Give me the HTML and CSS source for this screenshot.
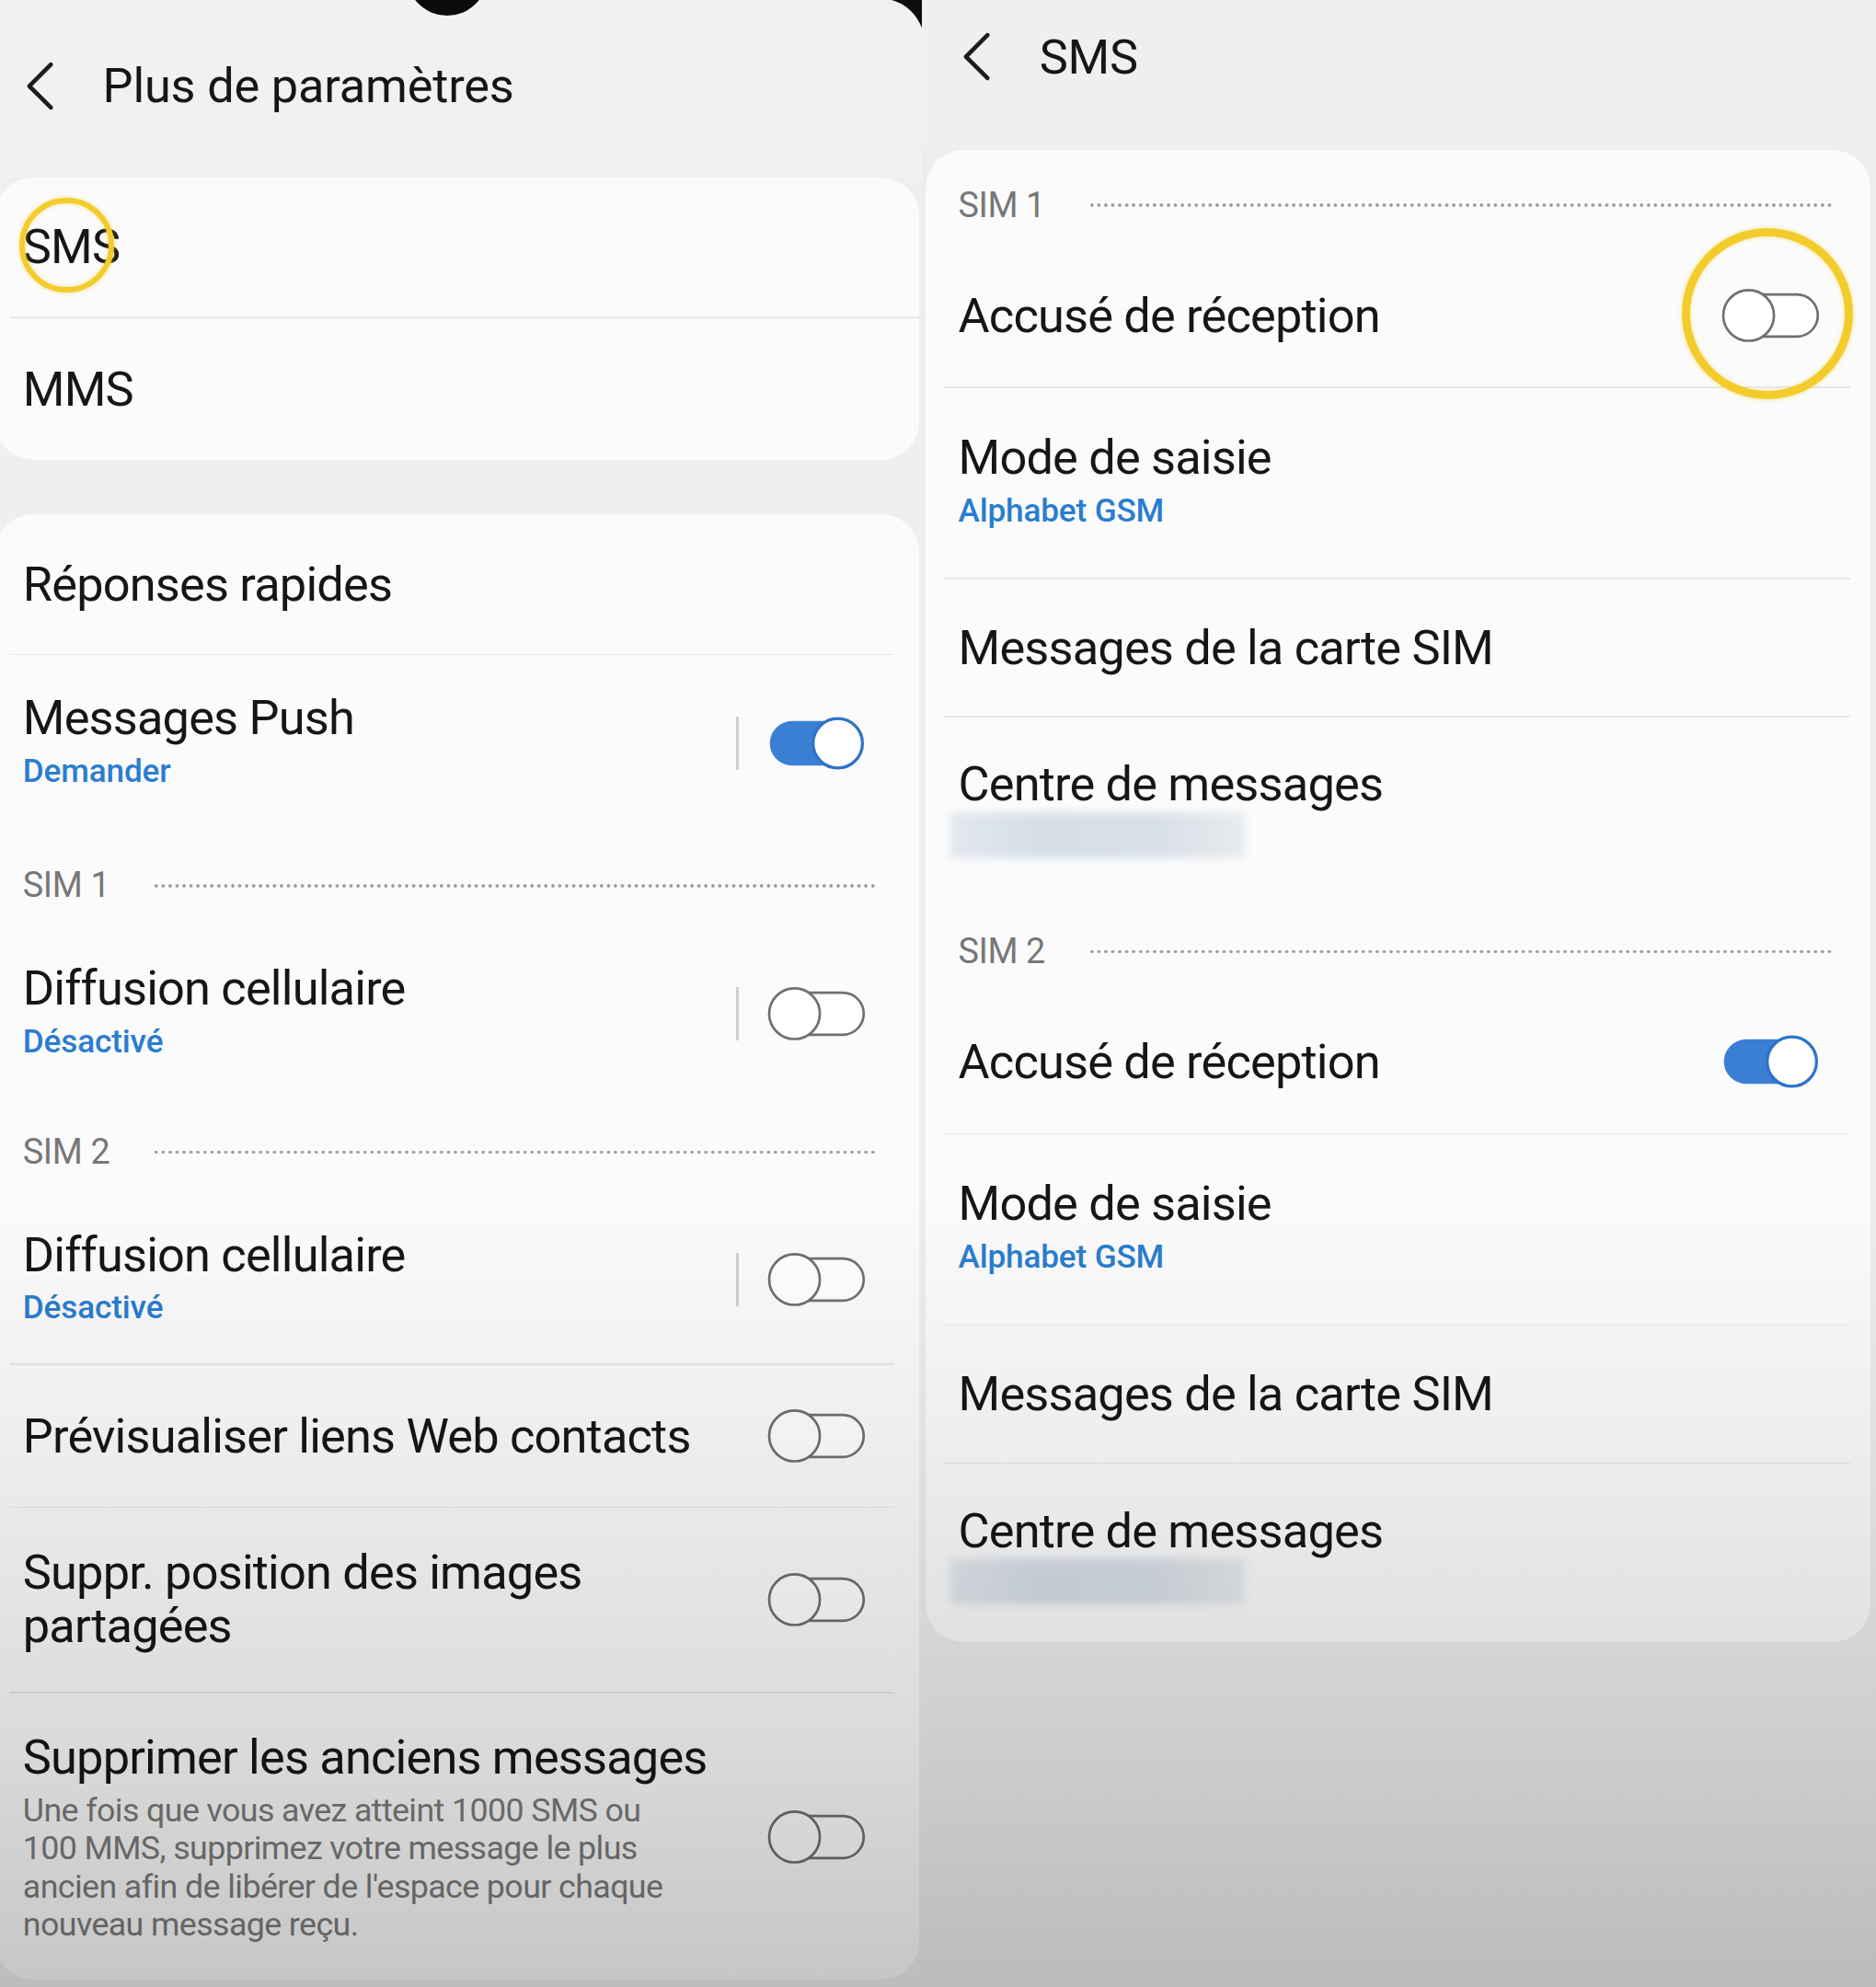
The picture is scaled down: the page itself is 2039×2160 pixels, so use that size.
FILE: index.html
```html
<!DOCTYPE html>
<html lang="fr">
<head>
<meta charset="utf-8">
<title>Paramètres SMS</title>
<link rel="stylesheet" href="styles.css">
</head>
<body>
<div class="screen">
  <section class="panel left">
    <header class="appbar">
      <svg class="back" viewBox="0 0 26 40" width="26" height="40"><polyline points="22,3 5,20 22,37" fill="none" stroke="#1d1d1d" stroke-width="3.4" stroke-linecap="round" stroke-linejoin="round"/></svg>
      <h1 class="apptitle">Plus de paramètres</h1>
    </header>

    <div class="card card-top">
      <div class="row h-110"><div class="text"><div class="title sms-title">SMS</div></div></div>
      <div class="divider"></div>
      <div class="row h-112"><div class="text"><div class="title">MMS</div></div></div>
    </div>

    <div class="card card-main">
      <div class="row h-110"><div class="text"><div class="title">Réponses rapides</div></div></div>
      <div class="divider"></div>
      <div class="row h-139">
        <div class="text"><div class="title">Messages Push</div><div class="sub">Demander</div></div>
        <span class="vbar"></span>
        <svg class="toggle" viewBox="0 0 80 46"><rect x="2" y="5" width="73" height="36" rx="18" fill="#3b7fd4"/><circle cx="57" cy="23" r="20" fill="#fff" stroke="#2f73c6" stroke-width="2.4"/></svg>
      </div>
      <div class="simhead"><span class="simlabel">SIM 1</span><span class="dots"></span></div>
      <div class="row h-132">
        <div class="text"><div class="title">Diffusion cellulaire</div><div class="sub">Désactivé</div></div>
        <span class="vbar"></span>
        <svg class="toggle" viewBox="0 0 80 46"><rect x="16" y="6" width="62" height="34" rx="17" fill="#fff" stroke="#707070" stroke-width="2"/><circle cx="22" cy="23" r="20.5" fill="#fff" stroke="#707070" stroke-width="2"/></svg>
      </div>
      <div class="simhead"><span class="simlabel">SIM 2</span><span class="dots"></span></div>
      <div class="row h-132">
        <div class="text"><div class="title">Diffusion cellulaire</div><div class="sub">Désactivé</div></div>
        <span class="vbar"></span>
        <svg class="toggle" viewBox="0 0 80 46"><rect x="16" y="6" width="62" height="34" rx="17" fill="#fff" stroke="#707070" stroke-width="2"/><circle cx="22" cy="23" r="20.5" fill="#fff" stroke="#707070" stroke-width="2"/></svg>
      </div>
      <div class="divider"></div>
      <div class="row h-112">
        <div class="text"><div class="title">Prévisualiser liens Web contacts</div></div>
        <svg class="toggle" viewBox="0 0 80 46"><rect x="16" y="6" width="62" height="34" rx="17" fill="#fff" stroke="#707070" stroke-width="2"/><circle cx="22" cy="23" r="20.5" fill="#fff" stroke="#707070" stroke-width="2"/></svg>
      </div>
      <div class="divider"></div>
      <div class="row h-145">
        <div class="text"><div class="title narrow">Suppr. position des images partagées</div></div>
        <svg class="toggle" viewBox="0 0 80 46"><rect x="16" y="6" width="62" height="34" rx="17" fill="#fff" stroke="#707070" stroke-width="2"/><circle cx="22" cy="23" r="20.5" fill="#fff" stroke="#707070" stroke-width="2"/></svg>
      </div>
      <div class="divider"></div>
      <div class="row h-228">
        <div class="text">
          <div class="title">Supprimer les anciens messages</div>
          <div class="desc">Une fois que vous avez atteint 1000 SMS ou<br>100 MMS, supprimez votre message le plus<br>ancien afin de libérer de l'espace pour chaque<br>nouveau message reçu.</div>
        </div>
        <svg class="toggle" viewBox="0 0 80 46"><rect x="16" y="6" width="62" height="34" rx="17" fill="#fff" stroke="#707070" stroke-width="2"/><circle cx="22" cy="23" r="20.5" fill="#fff" stroke="#707070" stroke-width="2"/></svg>
      </div>
    </div>

    <span class="camera"></span>
    <svg class="bezel" viewBox="0 0 24 22" width="24" height="22"><path d="M0 0 H24 V22 C20 12 12 3 0 0 Z" fill="#0d0d0d"/></svg>
    <span class="ring ring-sms"></span>
  </section>

  <section class="panel right">
    <header class="appbar appbar-right">
      <svg class="back" viewBox="0 0 26 40" width="26" height="40"><polyline points="22,3 5,20 22,37" fill="none" stroke="#1d1d1d" stroke-width="3.4" stroke-linecap="round" stroke-linejoin="round"/></svg>
      <h1 class="apptitle">SMS</h1>
    </header>

    <div class="card card-right">
      <div class="simhead first"><span class="simlabel">SIM 1</span><span class="dots"></span></div>
      <div class="row h-112">
        <div class="text"><div class="title">Accusé de réception</div></div>
        <svg class="toggle" viewBox="0 0 80 46"><rect x="16" y="6" width="62" height="34" rx="17" fill="#fff" stroke="#707070" stroke-width="2"/><circle cx="22" cy="23" r="20.5" fill="#fff" stroke="#707070" stroke-width="2"/></svg>
      </div>
      <div class="divider"></div>
      <div class="row h-150">
        <div class="text"><div class="title">Mode de saisie</div><div class="sub">Alphabet GSM</div></div>
      </div>
      <div class="divider"></div>
      <div class="row h-108"><div class="text"><div class="title">Messages de la carte SIM</div></div></div>
      <div class="divider"></div>
      <div class="row row-centre">
        <div class="text"><div class="title">Centre de messages</div><div class="blurred"></div></div>
      </div>
      <div class="simhead first"><span class="simlabel">SIM 2</span><span class="dots"></span></div>
      <div class="row h-112">
        <div class="text"><div class="title">Accusé de réception</div></div>
        <svg class="toggle" viewBox="0 0 80 46"><rect x="2" y="5" width="73" height="36" rx="18" fill="#3b7fd4"/><circle cx="57" cy="23" r="20" fill="#fff" stroke="#2f73c6" stroke-width="2.4"/></svg>
      </div>
      <div class="divider"></div>
      <div class="row h-150">
        <div class="text"><div class="title">Mode de saisie</div><div class="sub">Alphabet GSM</div></div>
      </div>
      <div class="divider"></div>
      <div class="row h-108"><div class="text"><div class="title">Messages de la carte SIM</div></div></div>
      <div class="divider"></div>
      <div class="row row-centre">
        <div class="text"><div class="title">Centre de messages</div><div class="blurred"></div></div>
      </div>
    </div>

    <span class="ring ring-toggle"></span>
  </section>

  <div class="shade"></div>
</div>
</body>
</html>
```

FILE: styles.css
```css
html, body {
  margin: 0;
  padding: 0;
  background: #bdbdbd;
  overflow: hidden;
}

.screen {
  zoom: 1.3777;
  position: relative;
  width: 1480px;
  height: 1568px;
  display: flex;
  overflow: hidden;
  font-family: Roboto, "Noto Sans", "Liberation Sans", sans-serif;
  color: #161616;
}

.panel {
  position: relative;
  background: #efefef;
  display: flex;
  flex-direction: column;
}

.panel.left {
  width: 727px;
}

.panel.right {
  flex: 1;
  background: #ededed;
}

/* app bar */
.appbar {
  height: 140px;
  display: flex;
  align-items: center;
  padding-left: 18px;
  padding-bottom: 4px;
  box-sizing: border-box;
  background: #f1f1f1;
}

.appbar-right {
  height: 118px;
  padding-left: 30px;
  padding-bottom: 28px;
  background: #efefef;
}

.back {
  width: 26px;
  height: 40px;
  flex: none;
}

.apptitle {
  margin: 0 0 0 37px;
  font-size: 38px;
  font-weight: 400;
  letter-spacing: -0.15px;
  line-height: 44px;
}

.appbar-right .apptitle {
  margin-left: 37px;
}

/* cards */
.card {
  background: #fbfbfb;
  border-radius: 30px;
}

.card-top {
  margin-left: -4px;
  margin-right: 2px;
  padding-left: 22px;
  padding-right: 0;
}

.card-main {
  margin-top: 43px;
  margin-left: -4px;
  margin-right: 2px;
  padding-left: 22px;
  padding-right: 42px;
  height: 1156px;
}

.card-right {
  margin-left: 3px;
  margin-right: 4px;
  padding-left: 26px;
  padding-right: 40px;
}

.divider {
  height: 1px;
  background: #e7e7e7;
  margin-left: -10px;
  margin-right: -22px;
}

.card-right .divider {
  margin-left: -12px;
  margin-right: -24px;
}

/* rows */
.row {
  display: flex;
  align-items: center;
  box-sizing: border-box;
}

.h-108 { height: 108px; }
.h-110 { height: 110px; }
.h-112 { height: 112px; }
.h-132 { height: 132px; }
.h-139 { height: 139px; }
.h-145 { height: 145px; }
.h-150 { height: 150px; }
.h-228 { height: 228px; align-items: flex-start; padding-top: 29px; }

.h-228 .toggle {
  margin-top: 62px;
}

.text {
  flex: 1;
  min-width: 0;
}

.title {
  font-size: 38px;
  line-height: 44px;
  letter-spacing: -0.6px;
  color: #161616;
}

.title.narrow {
  max-width: 520px;
  line-height: 42px;
}

.sub {
  font-size: 25.5px;
  line-height: 40px;
  font-weight: 500;
  letter-spacing: -0.1px;
  color: #2a7dd0;
}

.desc {
  margin-top: 5px;
  font-size: 26px;
  line-height: 30px;
  letter-spacing: -0.45px;
  color: #7b7b7b;
}

.vbar {
  width: 2px;
  height: 42px;
  background: #cfcfcf;
  margin-right: 22px;
  flex: none;
}

.toggle {
  width: 78px;
  height: 45px;
  flex: none;
}

/* sim headers */
.simhead {
  height: 78px;
  box-sizing: border-box;
  padding-top: 28px;
  padding-bottom: 20px;
  display: flex;
  align-items: center;
}

.simhead.first {
  height: 75px;
  padding-top: 29px;
  padding-bottom: 16px;
}

.simlabel {
  font-size: 27.5px;
  line-height: 30px;
  letter-spacing: -0.3px;
  color: #777777;
  flex: none;
}

.dots {
  flex: 1;
  height: 4px;
  margin-left: 34px;
  margin-right: -8px;
  background-image: radial-gradient(circle, #9a9a9a 1px, transparent 1.5px);
  background-size: 5.5px 4px;
  background-repeat: repeat-x;
}

.card-right .dots {
  margin-right: -11px;
}

/* centre de messages */
.row-centre {
  height: 141px;
  align-items: flex-start;
  padding-top: 31px;
}

.blurred {
  width: 232px;
  height: 36px;
  margin-left: -6px;
  background: linear-gradient(90deg, #e3e8ee 0%, #d6dee7 30%, #d9e0e8 70%, #e8ebee 100%);
  filter: blur(3px);
}

/* decorations */
.camera {
  position: absolute;
  left: 321px;
  top: -52px;
  width: 64px;
  height: 64px;
  border-radius: 50%;
  background: #0b0b0b;
}

.bezel {
  position: absolute;
  right: 0;
  top: 0;
}

.ring {
  position: absolute;
  border-radius: 50%;
  border: 5px solid #f3cc2b;
  box-shadow: 0 0 4px rgba(245, 206, 40, 0.55), inset 0 0 4px rgba(245, 206, 40, 0.45);
  pointer-events: none;
}

.ring-sms {
  left: 15px;
  top: 156px;
  width: 66px;
  height: 66px;
}

.ring-toggle {
  left: 600px;
  top: 180px;
  width: 122px;
  height: 122px;
  border-width: 7px;
}

.shade {
  position: absolute;
  inset: 0;
  pointer-events: none;
  background: linear-gradient(to bottom,
    rgba(0, 0, 0, 0) 0%,
    rgba(0, 0, 0, 0) 60%,
    rgba(0, 0, 0, 0.05) 72%,
    rgba(0, 0, 0, 0.12) 86%,
    rgba(0, 0, 0, 0.21) 100%);
}
```
